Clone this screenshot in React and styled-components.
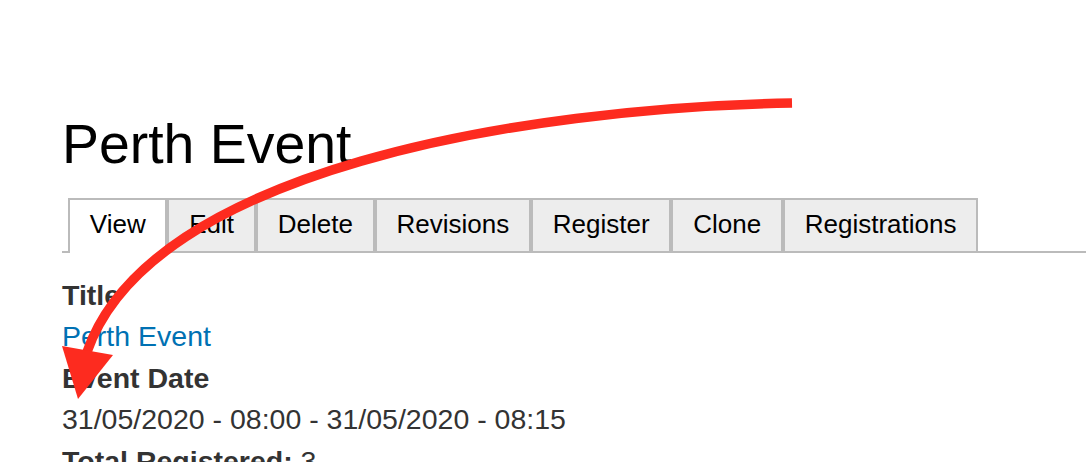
import React from "react";
import styled, { createGlobalStyle } from "styled-components";

const GlobalStyle = createGlobalStyle`
  html, body {
    margin: 0;
    padding: 0;
    background: #fff;
    overflow: hidden;
  }
  body {
    font-family: "Liberation Sans", Arial, Helvetica, sans-serif;
    color: #333;
  }
`;

const tabs = ["View", "Edit", "Delete", "Revisions", "Register", "Clone", "Registrations"];

const fields = [
  { label: "Title", value: "Perth Event", link: true },
  { label: "Event Date", value: "31/05/2020 - 08:00 - 31/05/2020 - 08:15" },
];

const App = () => {
  return (
    <>
      <GlobalStyle />
      <Page>
        <Heading>Perth Event</Heading>
        <TabBar>
          {tabs.map((t, i) => (
            <Tab key={t} $active={i === 0}>
              {t}
            </Tab>
          ))}
        </TabBar>
        <Content>
          {fields.map((f) => (
            <Field key={f.label}>
              <Label>{f.label}</Label>
              <Value>{f.link ? <NodeLink href="#">{f.value}</NodeLink> : f.value}</Value>
            </Field>
          ))}
          <InlineField>
            <Label as="span">Total Registered:</Label>
            {"\u00a0"}
            <span>3</span>
          </InlineField>
        </Content>
        <Arrow width="1086" height="462" viewBox="0 0 1086 462">
          <path
            d="M792 103 C520 108 150 170 87 352"
            fill="none"
            stroke="#fd2b1f"
            strokeWidth="9.5"
            strokeLinecap="butt"
          />
          <polygon points="62,346 113,355 78,399" fill="#fd2b1f" />
        </Arrow>
      </Page>
    </>
  );
};
export default App;

const Page = styled.div`
  position: relative;
  padding: 111px 0 0 62px;
  min-height: 462px;
  box-sizing: border-box;
`;

const Heading = styled.h1`
  margin: 0 0 21px 0;
  font-size: 55.4px;
  line-height: 66px;
  font-weight: normal;
  color: #000;
`;

const TabBar = styled.ul`
  display: flex;
  list-style: none;
  margin: 0;
  padding: 0 0 0 6px;
  border-bottom: 2px solid #bbb;
`;

const Tab = styled.li`
  font-size: 26px;
  line-height: 49px;
  padding: 0 19.8px;
  border: 2px solid #bbb;
  border-bottom: 0;
  color: #000;
  background: ${(p) => (p.$active ? "#fff" : "#ededed")};
  margin-bottom: ${(p) => (p.$active ? "-2px" : "0")};
  padding-bottom: ${(p) => (p.$active ? "4px" : "2px")};
`;

const Content = styled.div`
  margin-top: 22px;
  font-size: 28.5px;
`;

const Field = styled.div`
  margin-bottom: 2px;
`;

const Label = styled.div`
  font-weight: bold;
  line-height: 41px;
  color: #333;
`;

const Value = styled.div`
  line-height: 40px;
  color: #333;
`;

const NodeLink = styled.a`
  color: #0071b3;
  text-decoration: none;
`;

const InlineField = styled.div`
  line-height: 41px;
  color: #333;
`;

const Arrow = styled.svg`
  position: absolute;
  left: 0;
  top: 0;
  pointer-events: none;
`;
